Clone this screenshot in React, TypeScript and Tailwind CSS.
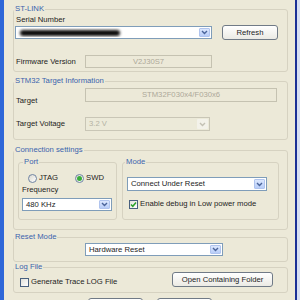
import React from "react";

const Chevron = ({ color }: { color: string }) => (
  <svg width="7" height="5" viewBox="0 0 7 5">
    <path d="M1 1 L3.5 3.5 L6 1" fill="none" stroke={color} strokeWidth="1.4" />
  </svg>
);

function Combo({
  size,
  disabled,
  children,
}: {
  size: string;
  disabled?: boolean;
  children?: React.ReactNode;
}) {
  return (
    <div
      className={`flex shrink-0 p-[1px] border ${size} ${
        disabled ? "border-[#c9c6b6] bg-[#ecead9]" : "border-[#7f9db9] bg-white"
      }`}
    >
      <div className="flex-1 flex items-center pl-[2px] overflow-hidden whitespace-nowrap">
        {children}
      </div>
      {disabled ? (
        <div className="w-[11px] flex items-center justify-center bg-[#f3f2ea] rounded-[1px]">
          <Chevron color="#c3c1b4" />
        </div>
      ) : (
        <div className="w-[11px] flex items-center justify-center bg-linear-to-b from-[#dce7fd] to-[#b8cdf8] border border-[#b0c4ee] rounded-[1px]">
          <Chevron color="#4a649a" />
        </div>
      )}
    </div>
  );
}

function Button({ size, children }: { size: string; children?: React.ReactNode }) {
  return (
    <div
      className={`flex shrink-0 items-center justify-center border border-[#707a86] rounded-[3px] bg-linear-to-b from-white to-[#ebeae4] whitespace-nowrap ${size}`}
    >
      {children}
    </div>
  );
}

function Group({
  title,
  className,
  legend,
  children,
}: {
  title: string;
  className: string;
  legend?: string;
  children?: React.ReactNode;
}) {
  return (
    <fieldset className={`border border-[#d6d2c1] rounded-[3px] shrink-0 ${className}`}>
      <legend className={`px-[1px] leading-[10px] text-[#3b63ad] ${legend ?? ""}`}>{title}</legend>
      {children}
    </fieldset>
  );
}

const Radio = ({ checked }: { checked?: boolean }) => (
  <div className="w-[9px] h-[9px] shrink-0 rounded-full border border-[#6f84a3] bg-linear-to-br from-[#d9d8d0] to-white flex items-center justify-center">
    {checked && <div className="w-[5px] h-[5px] rounded-full bg-[#3aad3c]" />}
  </div>
);

const Check = ({ checked }: { checked?: boolean }) => (
  <div className="w-[9px] h-[9px] shrink-0 border border-[#48607f] bg-linear-to-br from-[#e2e1da] to-white flex items-center justify-center">
    {checked && (
      <svg width="7" height="7" viewBox="0 0 7 7">
        <path d="M1 3.5 L2.8 5.3 L6 1.5" fill="none" stroke="#2aa12a" strokeWidth="1.5" />
      </svg>
    )}
  </div>
);

export default function App() {
  return (
    <div className="flex w-[300px] h-[300px] overflow-hidden font-['Liberation_Sans',Arial,sans-serif] text-[7.7px] leading-[10px] text-[#1c1c1c]">
      <div className="w-[4px] shrink-0 bg-[#2f67d8]" />
      <div className="w-[291px] shrink-0 bg-[#ece9d8] flex flex-col pt-[4px] pl-[9px] pr-[7px] overflow-hidden">
        {/* ST-LINK */}
        <Group title="ST-LINK" className="w-[275px] pb-[3px]">
          <div className="pl-[2px] mt-[1px]">Serial Number</div>
          <div className="flex items-center h-[15px]">
            <Combo size="w-[197px] h-[13px] ml-[1px]">
              <div className="ml-[1px] w-[100px] h-[6px] rounded-full bg-[#0a0a0a] blur-[1.4px]" />
            </Combo>
            <Button size="w-[56px] h-[15px] ml-[10px]">Refresh</Button>
          </div>
          <div className="flex items-center mt-[15px] h-[13px]">
            <div className="w-[71px] pl-[2px]">Firmware Version</div>
            <div className="w-[127px] h-[13px] border border-[#c5c2b1] flex items-center justify-center text-[#aca899]">
              V2J30S7
            </div>
          </div>
        </Group>

        {/* STM32 Target Information */}
        <Group title="STM32 Target Information" className="w-[275px] mt-[4px] pb-[8px]">
          <div className="flex items-start mt-[2px]">
            <div className="w-[71px] pl-[2px] mt-[8px]">Target</div>
            <div className="w-[192px] h-[14px] border border-[#c5c2b1] flex items-center justify-center text-[#aca899]">
              STM32F030x4/F030x6
            </div>
          </div>
          <div className="flex items-center mt-[11px]">
            <div className="w-[71px] pl-[2px]">Target Voltage</div>
            <Combo size="w-[125px] h-[14px]" disabled>
              <span className="text-[#b5b3a4]">3.2 V</span>
            </Combo>
          </div>
        </Group>

        {/* Connection settings */}
        <Group title="Connection settings" className="w-[275px] mt-[5px] pb-[9px]">
          <div className="flex pl-[4px] gap-[5px]">
            <Group title="Port" className="w-[99px] mt-[2px] pb-[8px]" legend="ml-[4px]">
              <div className="flex items-center h-[10px] mt-[6px] pl-[9px]">
                <div className="flex items-center gap-[2px] w-[47px]">
                  <Radio />
                  <span>JTAG</span>
                </div>
                <div className="flex items-center gap-[2px]">
                  <Radio checked />
                  <span>SWD</span>
                </div>
              </div>
              <div className="mt-[2px] pl-[3px]">Frequency</div>
              <div className="mt-[3px] pl-[3px]">
                <Combo size="w-[90px] h-[13px]">480 KHz</Combo>
              </div>
            </Group>
            <Group title="Mode" className="w-[157px] mt-[2px] pb-[10px]" legend="ml-[2px]">
              <div className="mt-[10px] pl-[4px]">
                <Combo size="w-[140px] h-[14px]">Connect Under Reset</Combo>
              </div>
              <div className="flex items-center gap-[2px] h-[10px] mt-[8px] pl-[6px]">
                <Check checked />
                <span>Enable debug in Low power mode</span>
              </div>
            </Group>
          </div>
        </Group>

        {/* Reset Mode */}
        <Group title="Reset Mode" className="w-[275px] mt-[2px] pb-[5px]">
          <div className="mt-[1px] pl-[71px]">
            <Combo size="w-[138px] h-[13px]">Hardware Reset</Combo>
          </div>
        </Group>

        {/* Log File */}
        <Group title="Log File" className="w-[275px] pb-[5px]">
          <div className="flex items-start">
            <div className="flex items-center gap-[2px] h-[10px] mt-[5px] pl-[6px]">
              <Check />
              <span>Generate Trace LOG File</span>
            </div>
            <Button size="w-[101px] h-[15px] ml-auto mr-[14px]">Open Containing Folder</Button>
          </div>
        </Group>

        <div className="flex mt-[5px] pl-[75px] gap-[14px]">
          <Button size="w-[55px] h-[20px]" />
          <Button size="w-[55px] h-[20px]" />
        </div>
      </div>
      <div className="w-[2px] shrink-0 bg-[#1b2f95]" />
      <div className="w-[3px] shrink-0 bg-[#d6def2]" />
    </div>
  );
}
